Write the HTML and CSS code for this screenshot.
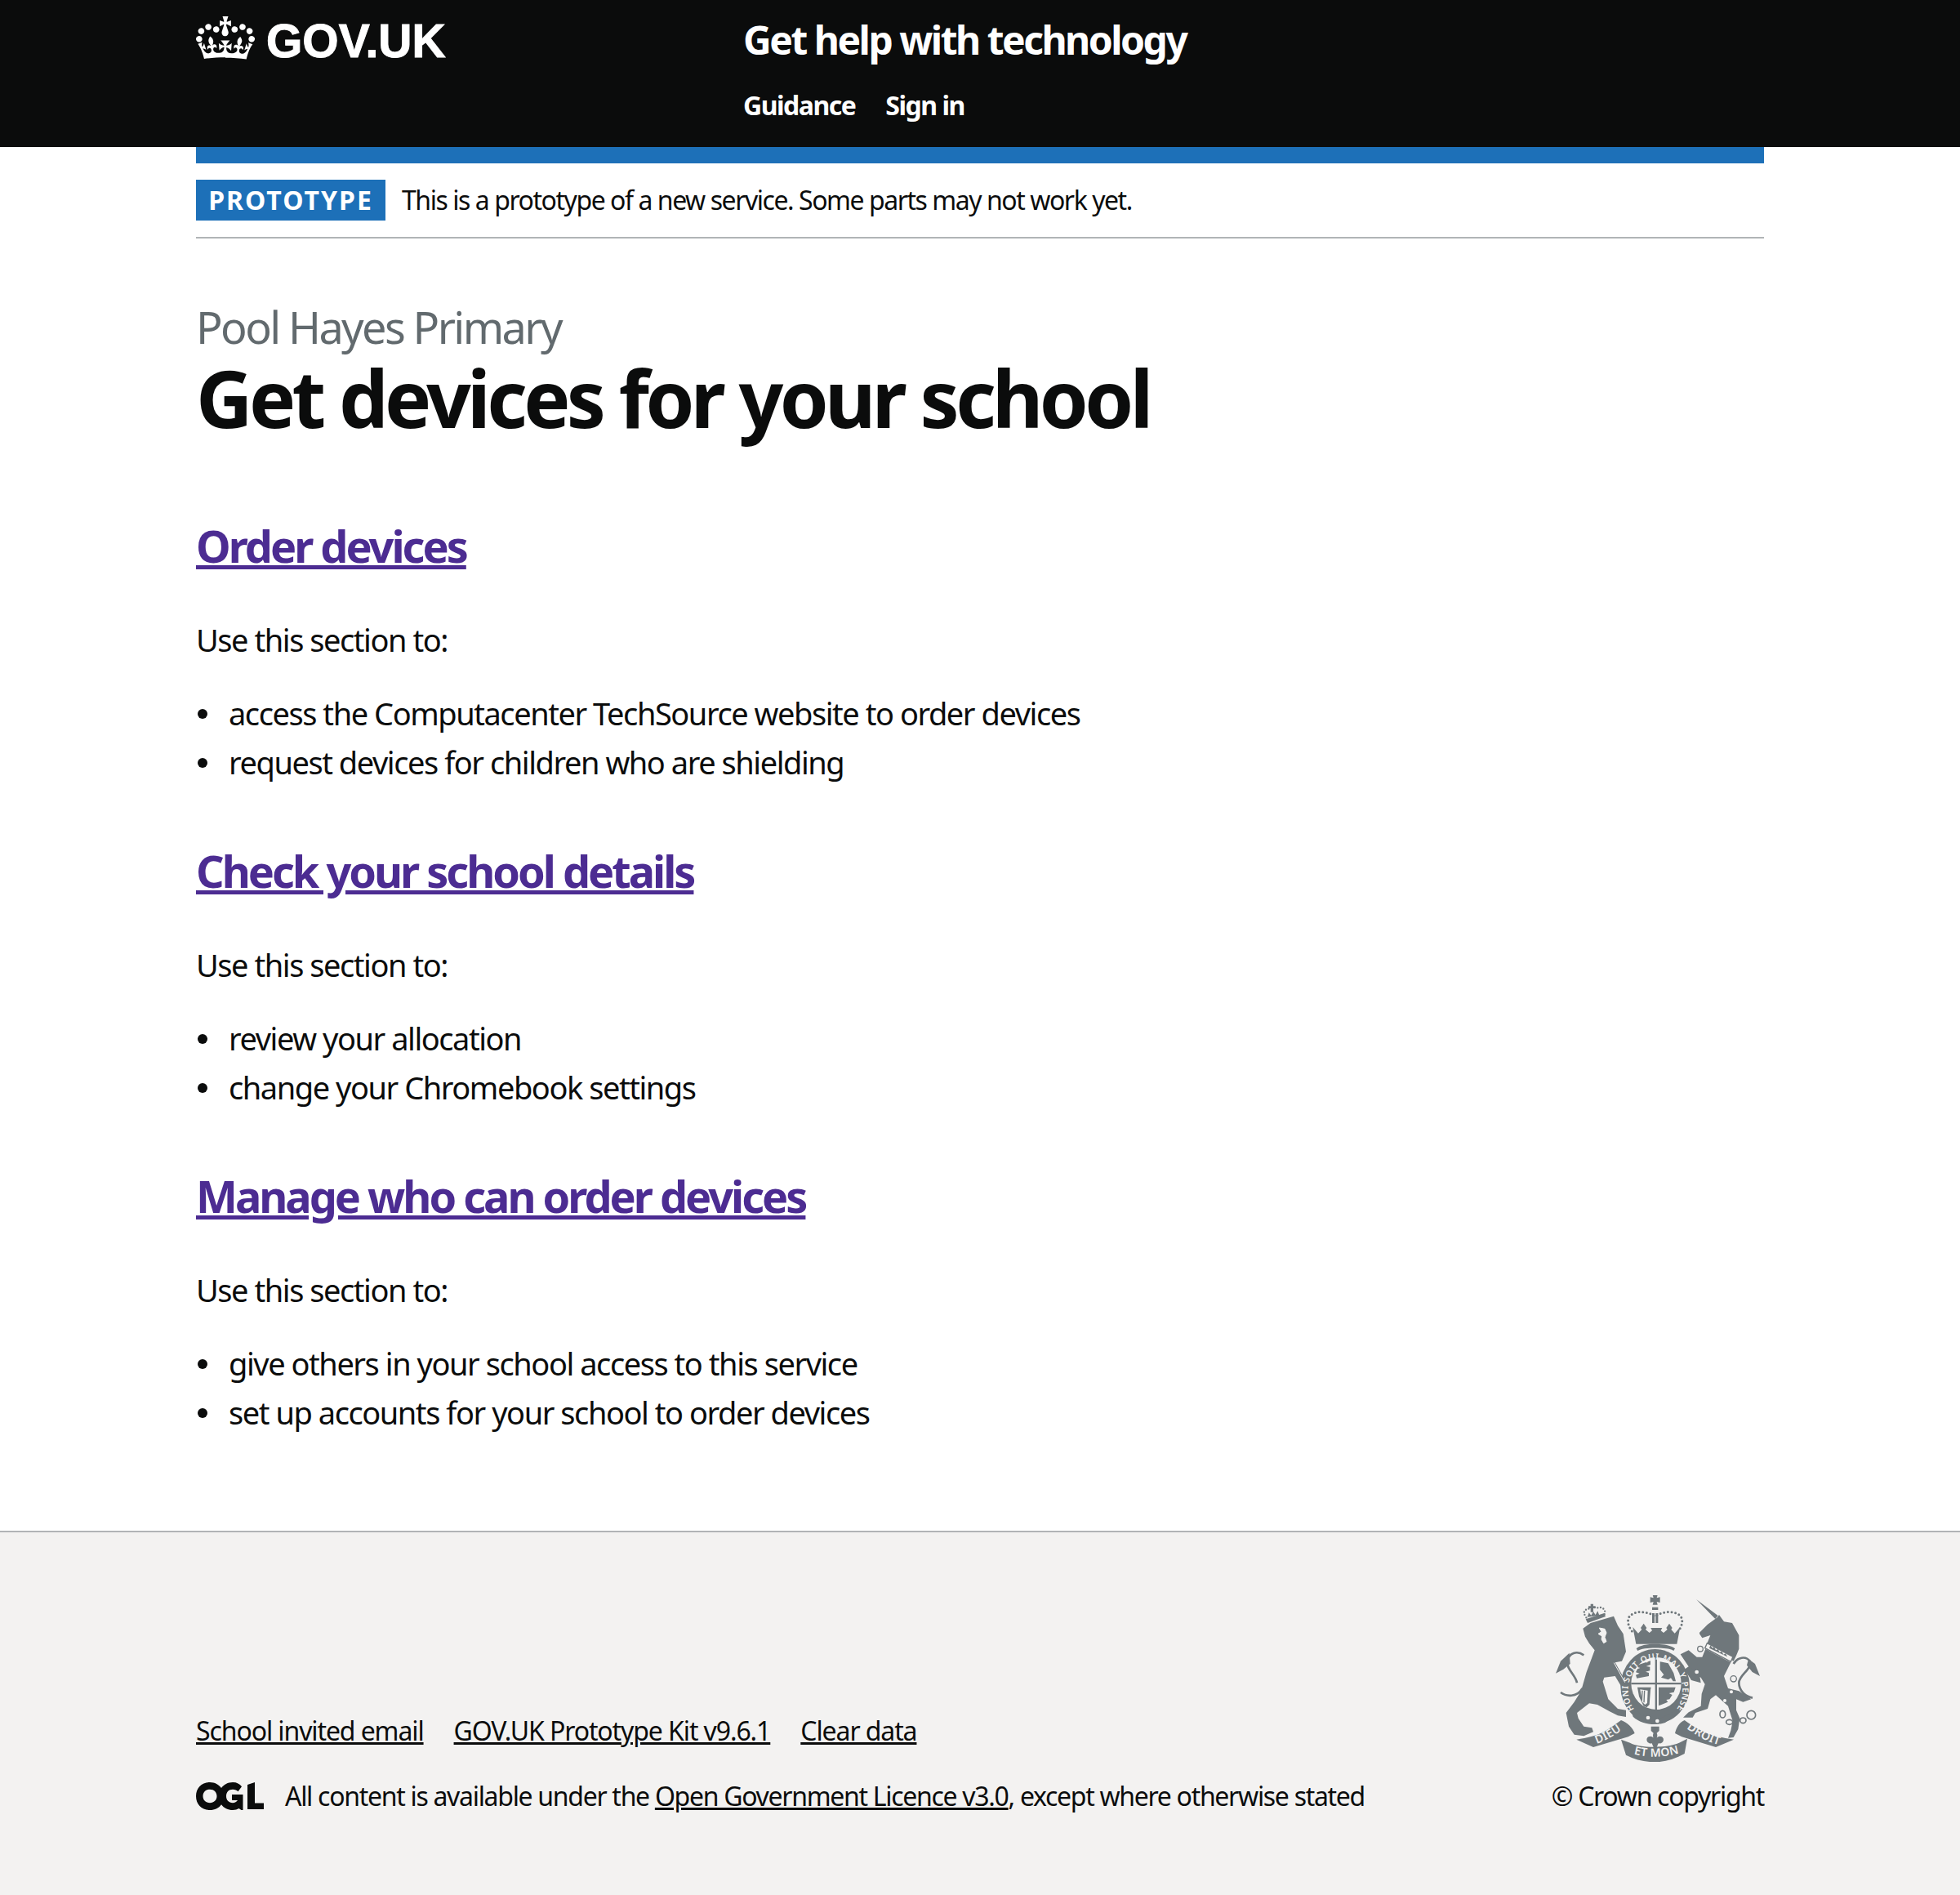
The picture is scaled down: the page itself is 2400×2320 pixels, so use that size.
FILE: index.html
```html
<!DOCTYPE html>
<html lang="en">
<head>
    <meta charset="UTF-8">
    <meta name="viewport" content="width=device-width, initial-scale=1.0">
    <title>Get devices for your school - Get help with technology</title>
    <link rel="stylesheet" href="styles.css">
</head>
<body>
    <header class="site-header">
        <div class="width-container header-inner">
            <a class="header-logo" href="#">
                <svg class="crown" viewBox="0 0 132 97" aria-hidden="true">
                    <path fill="#fff" d="M25 30.200c3.500 1.500 7.700-.200 9.100-3.700 1.500-3.600-.200-7.800-3.900-9.200-3.600-1.400-7.600.300-9.100 3.900-1.400 3.500.300 7.500 3.900 9zM9 39.500c3.600 1.500 7.800-.200 9.200-3.700 1.500-3.600-.200-7.800-3.900-9.100-3.600-1.500-7.600.200-9.100 3.800-1.400 3.500.300 7.500 3.800 9zM4.400 57.200c3.500 1.500 7.700-.200 9.100-3.800 1.500-3.600-.200-7.700-3.900-9.100-3.600-1.500-7.600.200-9.100 3.800-1.400 3.500.300 7.600 3.900 9.100zm38.300-21.400c3.500 1.500 7.700-.200 9.100-3.800 1.500-3.600-.200-7.700-3.900-9.100-3.600-1.500-7.600.200-9.100 3.800-1.300 3.600.400 7.700 3.900 9.100zm64.400-5.600c-3.600 1.500-7.800-.200-9.100-3.700-1.500-3.600.200-7.800 3.800-9.200 3.600-1.400 7.700.300 9.200 3.900 1.300 3.500-.400 7.500-3.900 9zm15.900 9.300c-3.600 1.500-7.700-.200-9.100-3.700-1.500-3.600.200-7.800 3.700-9.100 3.600-1.500 7.700.200 9.200 3.800 1.500 3.500-.300 7.500-3.800 9zm4.700 17.700c-3.600 1.500-7.800-.200-9.200-3.800-1.500-3.600.200-7.700 3.900-9.100 3.600-1.500 7.700.200 9.200 3.800 1.300 3.500-.400 7.600-3.900 9.100zM89.300 35.800c-3.600 1.500-7.800-.200-9.100-3.800-1.500-3.600.200-7.700 3.900-9.100 3.600-1.500 7.700.200 9.200 3.800 1.400 3.600-.300 7.700-4 9.100zM69.700 17.700l8.900 4.700V9.300l-8.900 2.800c-.200-.300-.500-.600-.900-.900L72.400 0H59.600l3.500 11.200c-.300.300-.600.500-.900.900l-8.800-2.800v13.100l8.800-4.700c.300.300.600.700.900.900l-5 15.400v.100c-.200.800-.400 1.600-.400 2.400 0 4.100 3.100 7.500 7 8.100h1.200c3.900-.600 7-4 7-8.100 0-.800-.100-1.700-.400-2.400V34l-5.100-15.400c.600-.200.900-.600 1.100-.900zM66 92.800c16.900 0 32.800 1.100 47.100 3.200 4-16.900 8.900-26.700 14-33.500l-9.600-3.400c1 4.900 1.100 7.200 0 10.300-1.500-1.400-3-4.300-4.200-8.700L108.600 76c2.800-2 5-3.200 7.500-3.300-4.400 9.400-10 11.900-13.600 11.200-4.300-.800-6.300-4.600-5.600-7.900 1-4.700 5.700-5.900 8-.500 4.300-8.700-3-11.400-7.600-8.800 7.100-7.200 7.900-13.500 2.100-21.100-8 6.100-8.100 12.300-4.500 20.800-4.700-5.400-12.100-2.500-9.500 6.200 3.400-5.200 7.900-2 7.200 3.100-.600 4.300-6.400 7.800-13.500 7.200-10.300-.900-10.900-8-11.200-13 2.500-.500 7.100 1.800 11 7.300L80.200 60c-4.100 4.400-8 5.300-12.300 5.400 1.400-4.400 8-11.600 8-11.600H55.500s6.400 7.200 7.900 11.600c-4.200-.100-8-1-12.300-5.400l1.400 16.400c3.900-5.500 8.500-7.700 10.900-7.300-.300 5-1 12.100-11.100 13-7.200.600-12.900-2.900-13.500-7.200-.700-5 3.800-8.300 7.100-3.100 2.700-8.700-4.600-11.600-9.400-6.200 3.700-8.500 3.600-14.700-4.600-20.800-5.800 7.600-5 13.900 2.200 21.100-4.700-2.600-11.900.100-7.700 8.800 2.300-5.500 7.100-4.200 8.100.500.700 3.300-1.300 7.100-5.700 7.900-3.500.700-9-1.800-13.500-11.200 2.500.100 4.700 1.300 7.500 3.300l-4.700-15.400c-1.200 4.400-2.700 7.200-4.300 8.700-1.100-3.100-.900-5.400 0-10.300l-9.500 3.400c5 6.900 9.900 16.700 14 33.500 14.800-2.100 30.800-3.200 47.700-3.200z"/>
                </svg>
                <span class="logo-text">GOV.UK</span>
            </a>
            <div class="header-content">
                <a class="service-name" href="#">Get help with technology</a>
                <nav class="header-nav">
                    <a href="#">Guidance</a>
                    <a href="#">Sign in</a>
                </nav>
            </div>
        </div>
    </header>

    <div class="width-container">
        <div class="blue-bar"></div>
        <div class="phase-banner">
            <strong class="phase-tag">PROTOTYPE</strong>
            <span>This is a prototype of a new service. Some parts may not work yet.</span>
        </div>

        <main class="main-wrapper">
            <span class="caption">Pool Hayes Primary</span>
            <h1>Get devices for your school</h1>

            <h2><a href="#">Order devices</a></h2>
            <p>Use this section to:</p>
            <ul>
                <li>access the Computacenter TechSource website to order devices</li>
                <li>request devices for children who are shielding</li>
            </ul>

            <h2><a href="#">Check your school details</a></h2>
            <p>Use this section to:</p>
            <ul>
                <li>review your allocation</li>
                <li>change your Chromebook settings</li>
            </ul>

            <h2><a href="#">Manage who can order devices</a></h2>
            <p>Use this section to:</p>
            <ul>
                <li>give others in your school access to this service</li>
                <li>set up accounts for your school to order devices</li>
            </ul>
        </main>
    </div>

    <footer class="site-footer">
        <div class="width-container footer-inner">
            <div class="footer-meta">
                <div class="footer-links">
                    <a href="#">School invited email</a>
                    <a href="#">GOV.UK Prototype Kit v9.6.1</a>
                    <a href="#">Clear data</a>
                </div>
                <div class="licence">
                    <svg class="ogl" viewBox="0 0 83 34" aria-hidden="true">
                        <path fill="#0b0c0c" d="M17 0C7 0 0 7 0 17s7 17 17 17c6 0 11-2.500 14-6.800 3.200 4.300 8.200 6.800 14 6.800 3 0 5.500-.8 7.500-2l3 2h2V15H44v7h7c-1.200 2-3.500 3.200-6 3.200-5 0-8-3.500-8-8.200s3-8.200 8-8.200c2.800 0 5 1 6.500 2.500l4.500-6C53.500 2 50 0 45 0 39 0 34 2.800 31 7 28 2.800 23 0 17 0zm0 8.800c5 0 8.500 3.500 8.500 8.200s-3.500 8.200-8.500 8.200-8.500-3.500-8.500-8.200S12 8.800 17 8.800zM63 3l9-3v25.500h11V33H63z"/>
                    </svg>
                    <span>All content is available under the <a href="#">Open Government Licence v3.0</a>, except where otherwise stated</span>
                </div>
            </div>
            <div class="copyright">
                <svg class="crest" viewBox="72 48 750 612" aria-hidden="true">
                    <g fill="#6f777b">
                        <!-- crown over the shield -->
                        <path d="M428 47h18l-3 11 12-3v20l-12-3 3 11h-18l3-11-12 3V55l12 3z"/>
                        <path d="M426 92h22v10h-22zM426 114h9v36h-9zM439 114h9v36h-9z"/>
                        <path d="M352 180C336 160 330 130 352 118c22-14 60-10 85 8 25-18 63-22 85-8 22 12 16 42 0 62" fill="none" stroke="#6f777b" stroke-width="9" stroke-linecap="round" stroke-dasharray="0 14"/>
                        <path d="M355 165l20 23 13-14-4-6 11-16 11 16-4 6 14 12 10-8-5-10h42l-5 10 10 8 14-12-4-6 11-16 11 16-4 6 13 14 20-23-12 62H367z"/>
                        <path d="M368 244c20-22 120-22 142 0l-5 8c-20-14-112-14-132 0z"/>
                        <!-- garter ring and shield -->
                        <ellipse cx="437" cy="383" rx="127" ry="137"/>
                        <ellipse cx="441" cy="372" rx="92" ry="96" fill="#f3f2f1"/>
                        <path d="M437 276h7v192h-7zM349 369h184v7h-184z"/>
                        <path d="M370 305l50-16v14l-16 6 14 2v14l-16 4 12 4v12l-44 8-4-12 14-6-14-4 6-12 10-4-12-4zM455 292l30 6 20 36 8 30h-10l-8-12-10 6-26-8 10-10-14-18zM450 386h62l-6 18-18 4 12 6-10 16-12 2 6 8-34 14zM372 386h50l-2 10-4 54-10 10-12-6-16-34z"/>
                        <path d="M382 394l28 4-2 46-8 6-10-10z" fill="#f3f2f1"/>
                        <path d="M390 398l-2 36M398 398l-2 44" stroke="#6f777b" stroke-width="4"/>
                        <path d="M352 480l22-6 8 12 70 16 60-30 8 10-46 34c-40 14-90 4-118-22z"/>
                        <circle cx="411" cy="498" r="7" fill="#f3f2f1"/>
                        <circle cx="445" cy="510" r="7" fill="#f3f2f1"/>
                        <!-- lion -->
                        <path d="M172 170l28-20 85-25 15 35 20 30 10 65-15 35-25 5 45 80 5 25-20-5-30-50-40 5-5 15 20 65 35 35 30 5v25l-30-5-30-15-45-25-30-5-45 35 5 20 20 30 30 5 5 15-35 15-35-5-20-30-10-50 30-40 25-40 20-70 30-80-20-25-15-25z"/>
                        <path d="M232 168l20 4 6 14-6 16 6 16-10 6-8-14 2-12-14-8 12-8zM286 296l40 72" fill="#f3f2f1" stroke="#f3f2f1" stroke-width="3"/>
                        <path d="M182 136l68-22 5 12-66 24z"/>
                        <path d="M184 130c-14-20-6-28 2-30 8-4 30-8 40-6 12-4 24 2 26 12 2 4 0 10-2 14" fill="none" stroke="#6f777b" stroke-width="7" stroke-linecap="round" stroke-dasharray="0 11"/>
                        <path d="M200 80h10v8h8v8h-8v14h-10V96h-8v-8h8zM188 128l6-16 8 10 8-14 8 12 8-14 6 16z"/>
                        <path d="M170 390c-20 35-60 30-80 15M150 370c-5-30-40-50-35-80 5-30 35-40 60-22" fill="none" stroke="#6f777b" stroke-width="8"/>
                        <path d="M122 260l-32 30-18 45 28-15 25-20z"/>
                        <!-- unicorn -->
                        <path d="M588 63l80 60-10 12z"/>
                        <path d="M600 185l30-30 35-25 7-10 18 25 30 5 25 45v50l-10 25-10 20-97-65 12-30-30 10-10-15z"/>
                        <path d="M622 245l93 50-25 50 15 45 40 10 45 30-30 10-25-10v40l13 30-6 40-17 30-20 2 10-27 7-35-17-55-45-40-20 15-10 35-45 15-10 17h-35l20-19 45-23 3-45 12-35-15-25-35-15-10-25-30-45 30-15 30 25h20z"/>
                        <path d="M560 310l40 30 5 30-35-10-25-40z"/>
                        <path d="M628 224l95 50-8 18-95-50z" fill="#f3f2f1" stroke="#6f777b" stroke-width="4"/>
                        <path d="M640 232l8 10 6-4 6 12 8-4 6 12 8-4 6 12 8-4 6 12-66-32z"/>
                        <path d="M725 300c15-25 45-30 60-10 10 30-40 50-40 80 0 30 25 50 50 55" fill="none" stroke="#6f777b" stroke-width="8"/>
                        <path d="M780 282l24 18 18 45-28-15-20-25z"/>
                        <circle cx="603" cy="245" r="10" fill="#f3f2f1" stroke="#6f777b" stroke-width="4"/>
                        <circle cx="590" cy="330" r="9" fill="#f3f2f1" stroke="#6f777b" stroke-width="4"/>
                        <circle cx="725" cy="355" r="11" fill="#f3f2f1" stroke="#6f777b" stroke-width="4"/>
                        <circle cx="717" cy="403" r="6" fill="#f3f2f1"/>
                        <circle cx="693" cy="435" r="6" fill="#f3f2f1"/>
                        <g fill="none" stroke="#6f777b" stroke-width="5">
                            <ellipse cx="685" cy="485" rx="10" ry="13"/>
                            <ellipse cx="710" cy="514" rx="12" ry="9"/>
                            <ellipse cx="760" cy="508" rx="11" ry="10"/>
                            <circle cx="790" cy="488" r="16"/>
                        </g>
                        <!-- motto ribbons -->
                        <path d="M148 578c87-13 107-30 164-71 23 8 43 28 50 48l-24 13-128 38z"/>
                        <path d="M726 578c-86-13-124-30-181-71-20 8-30 28-35 48l25 13 125 38z"/>
                        <path d="M312 578l33 12c35 20 135 20 180 0l30-15-10 55c-70 40-145 40-215 5z"/>
                        <path d="M422 530h30v16l-9 8c4 10 2 18-6 24 6-10 22-18 30-4 4 12-8 20-18 18l-6 14-6 12-6-12-6-14c-10 2-22-6-18-18 8-14 24-6 30 4-8-6-10-14-6-24l-9-8z"/>
                    </g>
                    <defs>
                        <path id="ring-path" d="M372 480A100 112 0 1 1 504 480"/>
                        <path id="dieu-path" d="M200 600C250 588 290 562 334 530"/>
                        <path id="droit-path" d="M540 528C590 566 630 588 686 602"/>
                        <path id="mon-path" d="M335 624C400 648 480 646 550 620"/>
                    </defs>
                    <g class="crest-text" fill="#f3f2f1">
                        <text class="crest-ring"><textPath href="#ring-path" startOffset="50%" text-anchor="middle">HONI SOIT QUI MAL Y PENSE</textPath></text>
                        <text><textPath href="#dieu-path" startOffset="50%" text-anchor="middle">DIEU</textPath></text>
                        <text><textPath href="#droit-path" startOffset="50%" text-anchor="middle">DROIT</textPath></text>
                        <text><textPath href="#mon-path" startOffset="50%" text-anchor="middle">ET MON</textPath></text>
                    </g>
                </svg>
                <a href="#">© Crown copyright</a>
            </div>
        </div>
    </footer>
</body>
</html>
```

FILE: styles.css
```css
* {
    box-sizing: border-box;
}

body {
    margin: 0;
    font-family: "Noto Sans", "Open Sans", sans-serif;
    font-size: 38px;
    line-height: 50px;
    letter-spacing: -1.45px;
    color: #0b0c0c;
    background: #fff;
}

a {
    color: inherit;
}

.width-container {
    width: 1920px;
    margin: 0 auto;
}

/* header */
.site-header {
    height: 180px;
    background: #0b0c0c;
    color: #fff;
}

.site-header a {
    color: #fff;
    text-decoration: none;
}

.header-inner {
    display: flex;
}

.header-logo {
    width: 670px;
    height: 100px;
    display: flex;
    align-items: flex-start;
    padding-top: 20px;
}

.crown {
    width: 72px;
    height: 53px;
}

.logo-text {
    font-family: "Liberation Sans", Arial, sans-serif;
    font-weight: 700;
    font-size: 57px;
    line-height: 60px;
    letter-spacing: 0;
    margin-left: 14px;
    -webkit-text-stroke: 1px #fff;
}

.service-name {
    display: block;
    margin-top: 19px;
    font-size: 48px;
    line-height: 60px;
    font-weight: 700;
    letter-spacing: -2.5px;
}

.header-nav {
    display: flex;
    gap: 37px;
    margin-top: 30px;
    font-size: 32px;
    line-height: 40px;
    font-weight: 700;
    letter-spacing: -1.5px;
}

/* phase banner */
.blue-bar {
    height: 20px;
    background: #1d70b8;
}

.phase-banner {
    display: flex;
    align-items: center;
    height: 92px;
    border-bottom: 2px solid #b1b4b6;
    font-size: 32px;
    letter-spacing: -1.45px;
}

.phase-tag {
    width: 232px;
    height: 50px;
    margin-right: 20px;
    background: #1d70b8;
    color: #fff;
    font-size: 32px;
    line-height: 50px;
    letter-spacing: 2px;
    text-align: center;
}

/* main */
.main-wrapper {
    padding-top: 76px;
    padding-bottom: 47px;
}

.caption {
    display: block;
    font-size: 54px;
    line-height: 64px;
    letter-spacing: -2.6px;
    color: #626a6e;
}

h1 {
    margin: 0 0 91px;
    font-size: 96px;
    line-height: 110px;
    font-weight: 700;
    letter-spacing: -4.6px;
}

h2 {
    margin: 0 0 55px;
    font-size: 54px;
    line-height: 70px;
    font-weight: 700;
    letter-spacing: -3px;
}

h2 a {
    color: #4c2c92;
}

p {
    margin: 0 0 40px;
}

ul {
    margin: 0 0 73px;
    padding: 0;
    list-style: none;
}

li {
    display: flex;
    margin-bottom: 10px;
}

li::before {
    content: "";
    flex: none;
    width: 12px;
    height: 12px;
    margin: 20px 26px 0 2px;
    border-radius: 50%;
    background: #0b0c0c;
}

/* footer */
.site-footer {
    height: 446px;
    background: #f3f2f1;
    border-top: 2px solid #b1b4b6;
    font-size: 32px;
    line-height: 40px;
    letter-spacing: -1.3px;
}

.footer-inner {
    display: flex;
    justify-content: space-between;
    align-items: flex-end;
    padding-top: 77px;
}

.footer-links {
    display: flex;
    gap: 37px;
    margin-bottom: 40px;
    letter-spacing: -1.1px;
}

.licence {
    display: flex;
    align-items: center;
    gap: 26px;
}

.ogl {
    width: 83px;
    height: 34px;
}

.copyright {
    display: flex;
    flex-direction: column;
    align-items: center;
}

.copyright a {
    text-decoration: none;
}

.crest {
    width: 250px;
    height: 204px;
    margin-bottom: 22px;
}

.crest-text {
    font-family: "Noto Sans", sans-serif;
    font-size: 42px;
    font-weight: 600;
    letter-spacing: 1px;
}

.crest-ring {
    font-size: 31px;
    letter-spacing: 2px;
}
```
